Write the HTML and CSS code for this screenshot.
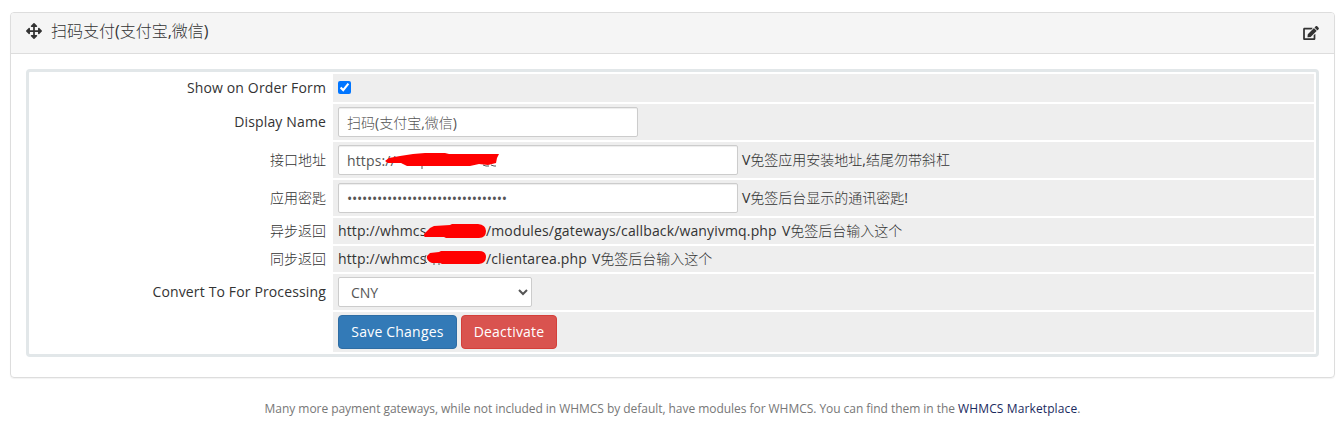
FILE: index.html
```html
<!DOCTYPE html>
<html lang="zh-CN">
<head>
<meta charset="utf-8">
<title>Payment Gateways</title>
<link rel="stylesheet" href="styles.css">
</head>
<body>
<section class="panel">
  <header class="panel-heading">
    <svg class="icon-move" viewBox="0 0 512 512"><path d="M352.201 425.775l-79.196 79.196c-9.373 9.373-24.568 9.373-33.941 0l-79.196-79.196c-15.119-15.119-4.411-40.971 16.971-40.97h51.162L228 284H127.196v51.162c0 21.382-25.851 32.09-40.971 16.971L7.029 272.937c-9.373-9.373-9.373-24.569 0-33.941L86.225 159.8c15.119-15.119 40.971-4.411 40.971 16.971V228H228V127.196h-51.23c-21.382 0-32.09-25.851-16.971-40.971l79.196-79.196c9.373-9.373 24.568-9.373 33.941 0l79.196 79.196c15.119 15.119 4.411 40.971-16.971 40.971h-51.162V228h100.804v-51.162c0-21.382 25.851-32.09 40.97-16.971l79.196 79.196c9.373 9.373 9.373 24.569 0 33.941L425.773 352.2c-15.119 15.119-40.971 4.411-40.97-16.971V284H284v100.804h51.23c21.382 0 32.09 25.851 16.971 40.971z"/></svg>
    <h3 class="panel-title">扫码支付(支付宝,微信)</h3>
    <svg class="icon-edit" viewBox="0 0 576 512"><path d="M402.6 83.2l90.2 90.2c3.8 3.8 3.8 10 0 13.8L274.4 405.6l-92.8 10.3c-12.4 1.4-22.9-9.1-21.5-21.5l10.3-92.8L388.8 83.2c3.8-3.8 10-3.8 13.8 0zm162-22.9l-48.8-48.8c-15.2-15.2-39.9-15.2-55.2 0l-35.4 35.4c-3.8 3.8-3.8 10 0 13.8l90.2 90.2c3.8 3.8 10 3.8 13.8 0l35.4-35.4c15.2-15.3 15.2-40 0-55.2zM384 346.2V448H64V128h229.8c3.2 0 6.2-1.3 8.5-3.5l40-40c7.6-7.6 2.2-20.5-8.5-20.5H48C21.5 64 0 85.5 0 112v352c0 26.5 21.5 48 48 48h352c26.5 0 48-21.5 48-48V306.2c0-10.7-12.9-16-20.5-8.5l-40 40c-2.2 2.3-3.5 5.3-3.5 8.5z"/></svg>
  </header>
  <div class="panel-body">
    <div class="form">
      <div class="row row-check"><div class="label latin">Show on Order Form</div><div class="field"><input class="check" type="checkbox" checked></div></div>
      <div class="row"><div class="label latin">Display Name</div><div class="field"><input class="control control-name" type="text" value="扫码(支付宝,微信)"></div></div>
      <div class="row"><div class="label">接口地址</div><div class="field"><div class="masked"><input class="control control-long latin" type="text" value="https://"><svg class="mark-input" viewBox="0 0 115 16"><path class="trace" d="M37 11V16M98 12L101 13H104M106 12L109 13H111"/><path d="M0 8L4 5L15 3L28 1L40 0H60L64 1H97L114 1L112 5L111 10L103 12L94 11L85 13H22L16 10H3Z"/></svg></div><span class="hint">V免签应用安装地址,结尾勿带斜杠</span></div></div>
      <div class="row"><div class="label">应用密匙</div><div class="field"><input class="control control-long password" type="password" value="abcdefghabcdefghabcdefghabcdefgh"><span class="hint">V免签后台显示的通讯密匙!</span></div></div>
      <div class="row row-text"><div class="label">异步返回</div><div class="field"><span class="url-start latin">http://whmcs</span><svg class="mark" viewBox="0 0 62 14"><path d="M1 9L6 4L10 2L26 1L28 0H54Q62 1 62 7Q62 14 55 14H22L20 13H1Q-1 12 1 9Z"/></svg><span class="url-modules latin">/modules/gateways/callback/wanyivmq.php</span><span class="hint">V免签后台输入这个</span></div></div>
      <div class="row row-text"><div class="label">同步返回</div><div class="field"><span class="url-start latin">http://whmcs</span><svg class="mark mark-low" viewBox="0 0 62 14"><path class="trace" d="M2 4L1 7V10L3 12M9 13H11M15 12V14"/><path d="M6 2L15 1L17 0H55Q62 0 62 6Q62 12 55 13H18L16 12H8Q2 10 3 5Z"/></svg><span class="url-client latin">/clientarea.php</span><span class="hint">V免签后台输入这个</span></div></div>
      <div class="row"><div class="label latin">Convert To For Processing</div><div class="field"><select class="control control-select"><option>CNY</option></select></div></div>
      <div class="row row-actions"><div class="label"></div><div class="field"><button class="btn btn-primary">Save Changes</button><button class="btn btn-danger">Deactivate</button></div></div>
    </div>
  </div>
</section>
<p class="note">Many more payment gateways, while not included in WHMCS by default, have modules for WHMCS. You can find them in the <a class="link" href="#">WHMCS Marketplace</a>.</p>
</body>
</html>
```

FILE: styles.css
```css
* { box-sizing: border-box; }
body {
  margin: 0;
  padding: 12px 7px 0 10px;
  background: #fff;
  color: #333;
  font: 14px/20px "Open Sans", "Noto Sans CJK SC Light", "Noto Sans CJK SC DemiLight", "Noto Sans CJK SC", sans-serif;
}
.panel {
  height: 366px;
  border: 1px solid #ddd;
  border-radius: 4px;
  box-shadow: 0 1px 1px rgba(0, 0, 0, .05);
}
.panel-heading {
  display: flex;
  align-items: center;
  height: 41px;
  padding: 0 15px;
  background: #f5f5f5;
  border-bottom: 1px solid #ddd;
  border-radius: 3px 3px 0 0;
}
.icon-move { width: 16px; height: 16px; margin: 0 9px 4px 0; fill: #333; }
.icon-edit { width: 16px; height: 14px; margin: 0 0 0 auto; fill: #333; }
.panel-title { margin: 0 0 4px; font-size: 16px; font-weight: 400; line-height: 20px; white-space: nowrap; }
.panel-body { padding: 15px; }
.form {
  display: grid;
  gap: 2px;
  padding: 2px;
  border: 3px solid #e2e7e9;
  border-radius: 4px;
}
.row { display: grid; grid-template-columns: 300px 1fr; gap: 2px; height: 36px; }
.row-check { height: 28px; }
.row-text { height: 26px; }
.row-actions { height: 40px; }
.label { display: flex; align-items: center; justify-content: flex-end; padding: 0 5px; white-space: nowrap; }
.field { display: flex; align-items: center; padding: 0 5px; background: #eee; white-space: nowrap; }
.latin { letter-spacing: .14px; }
.check { width: 13px; height: 13px; margin: 0 0 2px; }
.control {
  height: 30px;
  padding: 0 8px;
  border: 1px solid #ccc;
  border-radius: 2px;
  background: #fff;
  box-shadow: inset 0 1px 1px rgba(0, 0, 0, .075);
  color: #555;
  font: inherit;
}
.control.latin { letter-spacing: .14px; }
.control-name { width: 300px; }
.control-long { width: 400px; }
.control.password { letter-spacing: -.27px; }
.control-select { width: 194px; box-shadow: none; }
.hint { margin-left: 4px; }
.masked { position: relative; display: flex; }
.mark-input { position: absolute; left: 47px; top: 8px; width: 115px; height: 16px; fill: #f00; }
.trace { fill: none; stroke: #555; stroke-width: 1; }
.url-start { width: 86px; }
.mark { width: 62px; height: 14px; fill: #f00; }
.mark-low { margin-bottom: 2px; }
.url-modules { width: 292px; }
.url-client { width: 102px; }
.btn {
  height: 34px;
  padding: 0;
  border: 1px solid;
  border-radius: 4px;
  color: #fff;
  font: inherit;
  letter-spacing: .2px;
}
.btn-primary { width: 119px; margin-right: 4px; background: #337ab7; border-color: #2e6da4; }
.btn-danger { width: 96px; background: #d9534f; border-color: #d43f3a; }
.note { margin: 21px 0 0; color: #777; font-size: 12px; letter-spacing: -.045px; text-align: center; white-space: nowrap; }
.link { color: #1a2a5e; letter-spacing: .12px; text-decoration: none; }
```
